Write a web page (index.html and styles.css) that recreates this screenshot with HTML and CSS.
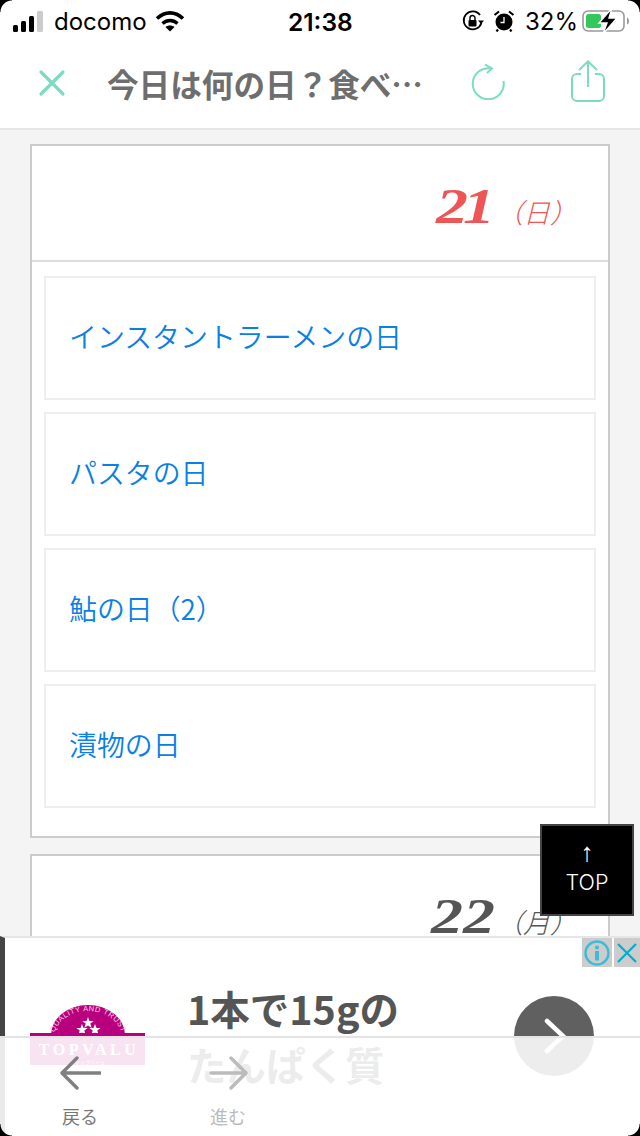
FILE: index.html
```html
<!DOCTYPE html>
<html lang="ja">
<head>
    <meta charset="UTF-8">
    <title>今日は何の日？食べ…</title>
    <link rel="stylesheet" href="styles.css">
</head>
<body>

    <div class="screen">
        <div class="statusbar">
            <div class="status-left">
                <svg class="signal" width="32" height="22" viewBox="0 0 32 22">
                    <rect x="1" y="15" width="5" height="7" rx="1.5" fill="#000"/>
                    <rect x="9" y="11" width="5" height="11" rx="1.5" fill="#000"/>
                    <rect x="17" y="6" width="5" height="16" rx="1.5" fill="#000"/>
                    <rect x="25" y="1" width="6" height="21" rx="1.5" fill="#ccc"/>
                </svg>
                <span class="carrier">docomo</span>
                <svg width="30" height="22" viewBox="0 0 30 22">
                    <path d="M2 8.5C10 1 20 1 28 8.5" fill="none" stroke="#000" stroke-width="3.6"/>
                    <path d="M7.5 13.5C12 9.5 18 9.5 22.5 13.5" fill="none" stroke="#000" stroke-width="3.4"/>
                    <path d="M15 21.5L10.5 17C13 15 17 15 19.5 17Z" fill="#000"/>
                </svg>
            </div>
            <div class="status-time">21:38</div>
            <div class="status-right">
                <svg width="22" height="22" viewBox="0 0 22 22">
                    <path d="M19.5 12.5A9 9 0 1 1 18 5" fill="none" stroke="#000" stroke-width="1.8"/>
                    <path d="M16 10.5h6l-3 3.5z" fill="#000"/>
                    <rect x="6.5" y="10" width="8" height="6.5" rx="1" fill="#000"/>
                    <path d="M8 10V8a2.5 2.5 0 0 1 5 0v2" fill="none" stroke="#000" stroke-width="1.4"/>
                </svg>
                <svg class="alarm" width="22" height="22" viewBox="0 0 22 22">
                    <circle cx="11" cy="12" r="8.5" fill="#000"/>
                    <path d="M1.5 5L6 1.5M20.5 5L16 1.5M5 19.5L3.5 21.5M17 19.5L18.5 21.5" stroke="#000" stroke-width="2.2"/>
                    <path d="M11 7v5.5H7.5" fill="none" stroke="#fff" stroke-width="1.3"/>
                </svg>
                <span class="battery-pct">32%</span>
                <svg width="48" height="26" viewBox="0 0 48 26">
                    <rect x="1" y="3" width="41" height="20" rx="5" fill="none" stroke="#999" stroke-width="1.6"/>
                    <path d="M45 9.5c1.5.5 2 2 2 3.5s-.5 3-2 3.5z" fill="#999"/>
                    <rect x="4" y="6" width="15" height="14" rx="2.5" fill="#34c759"/>
                    <path d="M30 0L17 15h8l-4 11 14-16h-8z" fill="#000" stroke="#fff" stroke-width="1.4"/>
                </svg>
            </div>
        </div>

        <div class="navbar">
            <svg class="nav-close" width="28" height="28" viewBox="0 0 28 28">
                <path d="M3 3L25 25M25 3L3 25" stroke="#7ddcc0" stroke-width="3.2" stroke-linecap="round"/>
            </svg>
            <div class="nav-title">今日は何の日？食べ…</div>
            <svg class="nav-reload" width="36" height="36" viewBox="0 0 36 36">
                <path d="M21 4.5A15.5 15.5 0 1 0 33.5 17" fill="none" stroke="#7ddcc0" stroke-width="2"/>
                <path d="M15 0.5L22 4.5L17 9" fill="none" stroke="#7ddcc0" stroke-width="2"/>
            </svg>
            <svg class="nav-share" width="36" height="42" viewBox="0 0 36 42">
                <path d="M11 14H7a5 5 0 0 0-5 5v17a5 5 0 0 0 5 5h22a5 5 0 0 0 5-5V19a5 5 0 0 0-5-5h-4" fill="none" stroke="#7ddcc0" stroke-width="2"/>
                <path d="M18 27V2M9 10L18 1.5L27 10" fill="none" stroke="#7ddcc0" stroke-width="2"/>
            </svg>
        </div>

        <div class="content">
            <div class="day-card">
                <div class="day-head">
                    <span class="day-num red"><span class="tight">2</span>1</span>
                    <span class="day-week red">（日）</span>
                </div>
                <div class="day-list">
                    <a class="day-item">インスタントラーメンの日</a>
                    <a class="day-item">パスタの日</a>
                    <a class="day-item">鮎の日（2）</a>
                    <a class="day-item">漬物の日</a>
                </div>
            </div>
            <div class="day-card">
                <div class="day-head">
                    <span class="day-num">22</span>
                    <span class="day-week">（月）</span>
                </div>
            </div>
        </div>

        <div class="top-btn">
            <span class="top-arrow">↑</span>
            <span>TOP</span>
        </div>

        <div class="ad">
            <div class="ad-logo">
                <svg width="116" height="60" viewBox="0 0 116 60">
                    <defs>
                        <path id="logo-star" d="M0-6L1.5-2H5.7L2.3 .6 3.6 5 0 2.4-3.6 5-2.3 .6-5.7-2H-1.5Z" fill="#fff"/>
                    </defs>
                    <path d="M21 30A37 30 0 0 1 95 30Z" fill="#b8007f"/>
                    <path id="logo-arc" d="M24 33A34 27 0 0 1 92 33" fill="none"/>
                    <text class="logo-arc-text"><textPath href="#logo-arc" startOffset="50%" text-anchor="middle">QUALITY AND TRUST</textPath></text>
                    <use href="#logo-star" x="58" y="18"/>
                    <use href="#logo-star" x="52" y="25"/>
                    <use href="#logo-star" x="65" y="25"/>
                    <rect x="0" y="28" width="115" height="3" fill="#b8007f"/>
                    <rect x="0" y="31" width="115" height="29" fill="#b8007f"/>
                    <text class="logo-name" x="59" y="50" text-anchor="middle">TOPVALU</text>
                    <text class="logo-kana" x="60" y="58.5" text-anchor="middle">トップバリュ</text>
                </svg>
            </div>
            <div class="ad-copy">1本で15gの<br>たんぱく質</div>
            <div class="ad-go">
                <svg width="24" height="36" viewBox="0 0 24 36">
                    <path d="M3 3L19 18L3 33" fill="none" stroke="#fff" stroke-width="4.5" stroke-linecap="round"/>
                </svg>
            </div>
            <div class="ad-icons">
                <span class="ad-icon">
                    <svg width="26" height="26" viewBox="0 0 26 26">
                        <circle cx="13" cy="13" r="11.5" fill="none" stroke="#3dbcd8" stroke-width="2.4"/>
                        <circle cx="13" cy="7.5" r="2" fill="#3dbcd8"/>
                        <rect x="11" y="11" width="4" height="9.5" fill="#3dbcd8"/>
                    </svg>
                </span>
                <span class="ad-icon ad-close">
                    <svg width="20" height="20" viewBox="0 0 20 20">
                        <path d="M1 1L19 19M19 1L1 19" stroke="#00aed0" stroke-width="2.2"/>
                    </svg>
                </span>
            </div>
        </div>

        <div class="toolbar">
            <div class="tool">
                <svg width="42" height="34" viewBox="0 0 42 34">
                    <path d="M41 17H4M18 2L3 17L18 32" fill="none" stroke="#808080" stroke-width="3.4" stroke-linecap="round" stroke-linejoin="round"/>
                </svg>
                <span>戻る</span>
            </div>
            <div class="tool off">
                <svg width="42" height="34" viewBox="0 0 42 34">
                    <path d="M4 17H39M24 2L39 17L24 32" fill="none" stroke="#bbb" stroke-width="3.4" stroke-linecap="round" stroke-linejoin="round"/>
                </svg>
                <span>進む</span>
            </div>
        </div>

        <div class="corner tl"></div>
        <div class="corner tr"></div>
        <div class="corner bl"></div>
        <div class="corner br"></div>
    </div>

</body>
</html>
```

FILE: styles.css
```css
* {
    box-sizing: border-box;
}
body {
    margin: 0;
    font-family: "Noto Sans CJK JP", "Liberation Sans", sans-serif;
}
.screen {
    width: 640px;
    height: 1136px;
    background-color: #f4f4f4;
    position: relative;
    overflow: hidden;
}

/* status bar */
.statusbar {
    height: 42px;
    background: white;
    position: relative;
    display: flex;
    align-items: center;
    justify-content: space-between;
    padding: 0 10px 0 12px;
    color: black;
}
.status-left, .status-right {
    display: flex;
    align-items: center;
}
.carrier {
    font-family: Inter, sans-serif;
    font-size: 24px;
    margin: 0 8px 0 10px;
}
.status-time {
    position: absolute;
    left: 288px;
    top: 7px;
    font-family: Inter, sans-serif;
    font-size: 24.5px;
    font-weight: 600;
}
.alarm {
    margin-left: 9px;
}
.battery-pct {
    font-family: Inter, sans-serif;
    font-size: 24px;
    margin: 0 4px 0 10px;
}

/* nav */
.navbar {
    height: 88px;
    background: white;
    border-bottom: 2px solid #e6e6e6;
    display: flex;
    align-items: center;
    position: relative;
    padding-left: 38px;
    padding-bottom: 5px;
}
.nav-title {
    margin-left: 41px;
    font-size: 31.6px;
    font-weight: 700;
    color: #6e6e6e;
    white-space: nowrap;
}
.nav-reload {
    position: absolute;
    left: 470px;
    top: 22px;
}
.nav-share {
    position: absolute;
    left: 570px;
    top: 18px;
}

/* calendar cards */
.content {
    padding: 14px 30px 0;
}
.day-card {
    background: white;
    border: 2px solid #ccc;
    margin-bottom: 16px;
}
.day-head {
    height: 116px;
    border-bottom: 2px solid #ddd;
    display: flex;
    align-items: baseline;
    justify-content: flex-end;
    padding: 30px 31px 0 0;
    color: #555;
}
.day-num {
    font-family: "Liberation Serif", serif;
    font-style: italic;
    font-weight: 700;
    font-size: 50px;
    line-height: 60px;
    display: inline-block;
    transform: scaleX(1.28);
    transform-origin: right;
}
.tight {
    letter-spacing: -4px;
}
.day-week {
    font-size: 27px;
    font-style: italic;
    font-weight: 300;
    margin-left: 1px;
}
.red {
    color: #ee5555;
}
.day-list {
    padding: 14px 12px 28px;
    display: flex;
    flex-direction: column;
    gap: 12px;
}
.day-item {
    height: 124px;
    border: 2px solid #eee;
    display: flex;
    align-items: center;
    padding: 0 0 4px 23px;
    font-size: 27.9px;
    font-weight: 350;
    color: #0a7fe5;
}

/* top button */
.top-btn {
    position: absolute;
    left: 540px;
    top: 824px;
    width: 94px;
    height: 92px;
    background: black;
    border: 2px solid #444;
    color: white;
    font-family: Inter, sans-serif;
    font-size: 21.5px;
    font-weight: 300;
    display: flex;
    flex-direction: column;
    align-items: center;
    justify-content: center;
    line-height: 30px;
    padding-bottom: 6px;
}
.top-arrow {
    font-family: "Liberation Sans", sans-serif;
    font-size: 26px;
}

/* ad */
.ad {
    position: absolute;
    left: 0;
    top: 936px;
    width: 640px;
    height: 200px;
    background: white;
    border-top: 2px solid #e6e6e6;
    border-left: 5px solid #444;
    display: flex;
    align-items: center;
    padding-bottom: 2px;
}
.ad-logo {
    margin: 0 0 2px 25px;
    width: 116px;
    height: 60px;
}
.ad-logo svg {
    display: block;
}
.logo-arc-text {
    font-family: "Liberation Sans", sans-serif;
    font-size: 7.5px;
    letter-spacing: 0.5px;
    fill: #f4d0e8;
}
.logo-name {
    font-family: "Liberation Serif", serif;
    font-weight: 700;
    font-size: 16px;
    letter-spacing: 3.5px;
    fill: white;
}
.logo-kana {
    font-size: 5px;
    fill: white;
}
.ad-copy {
    margin: 0 0 0 41px;
    width: 327px;
    font-size: 39.5px;
    font-weight: 700;
    line-height: 56px;
    color: #555;
    white-space: nowrap;
}
.ad-go {
    width: 80px;
    height: 80px;
    border-radius: 50%;
    background: #606060;
    display: flex;
    align-items: center;
    justify-content: center;
    padding-left: 4px;
}
.ad-icons {
    position: absolute;
    right: 0;
    top: 0;
    display: flex;
    gap: 2px;
}
.ad-icon {
    width: 30px;
    height: 29px;
    background: #ccc;
    display: flex;
    align-items: center;
    justify-content: center;
}
.ad-close {
    width: 26px;
}

/* bottom toolbar */
.toolbar {
    position: absolute;
    left: 0;
    top: 1036px;
    width: 640px;
    height: 100px;
    background: rgba(255, 255, 255, 0.89);
    border-top: 2px solid #e4e4e4;
    display: flex;
    padding-left: 59px;
    gap: 106px;
}
.tool {
    width: 42px;
    display: flex;
    flex-direction: column;
    align-items: center;
    padding-top: 18px;
    font-size: 18px;
    line-height: 26px;
    color: #777;
    white-space: nowrap;
    gap: 13px;
}
.tool.off {
    color: #bbb;
}

/* rounded phone corners */
.corner {
    position: absolute;
    width: 12px;
    height: 12px;
}
.tl {
    left: 0;
    top: 0;
    background: radial-gradient(circle at 100% 100%, transparent 11px, black 12px);
}
.tr {
    right: 0;
    top: 0;
    background: radial-gradient(circle at 0 100%, transparent 11px, black 12px);
}
.bl {
    left: 0;
    bottom: 0;
    background: radial-gradient(circle at 100% 0, transparent 11px, black 12px);
}
.br {
    right: 0;
    bottom: 0;
    background: radial-gradient(circle at 0 0, transparent 11px, black 12px);
}
```
